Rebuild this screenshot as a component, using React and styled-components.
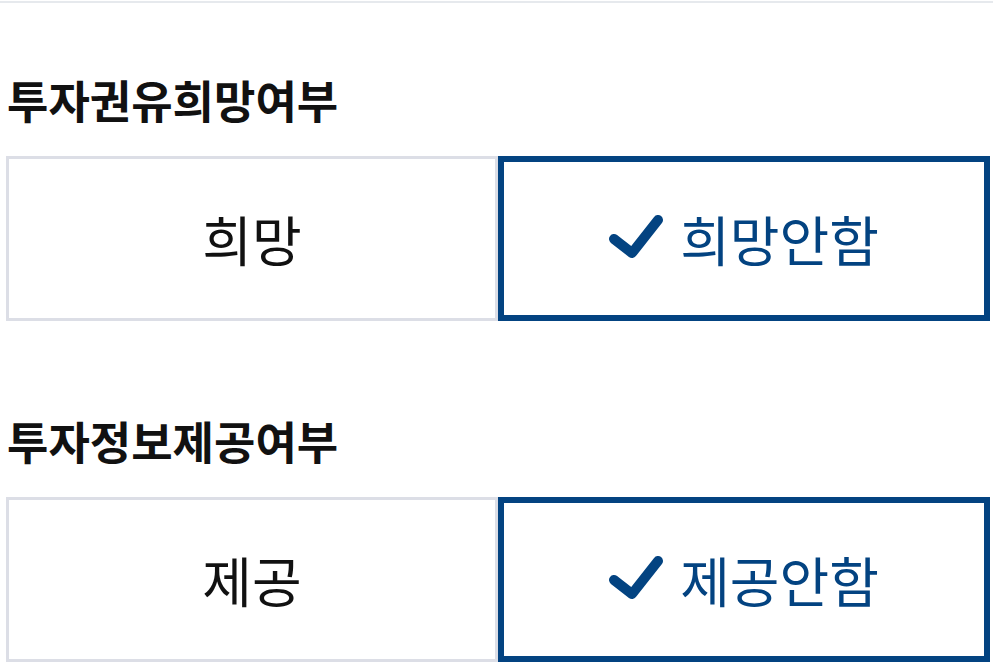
import React, { useState } from "react";
import styled, { createGlobalStyle } from "styled-components";

const GlobalStyle = createGlobalStyle`
  html, body {
    margin: 0;
    padding: 0;
    background: #ffffff;
    font-family: "Noto Sans CJK KR", "Noto Sans", sans-serif;
  }
`;

const Page = styled.div`
  padding: 1px 3px 0 6px;
  &::before {
    content: "";
    display: block;
    height: 2px;
    margin-left: -6px;
    margin-right: -3px;
    background: #e6e9ed;
  }
`;

const Section = styled.section`
  padding-top: ${(p) => p.$top}px;
`;

const Label = styled.h3`
  margin: 0 0 0 1px;
  font-size: 45px;
  font-weight: 700;
  line-height: 60px;
  color: #111111;
  letter-spacing: 0;
`;

const Options = styled.div`
  display: grid;
  grid-template-columns: 1fr 1fr;
  margin-top: ${(p) => p.$gap}px;
  height: 165px;
`;

const Option = styled.button`
  display: flex;
  align-items: center;
  justify-content: center;
  gap: 17px;
  box-sizing: border-box;
  height: 100%;
  margin: 0;
  padding: 0;
  background: #ffffff;
  border: ${(p) => (p.$active ? "6px solid #034381" : "3px solid #dcdee6")};
  color: ${(p) => (p.$active ? "#034381" : "#111111")};
  font-family: inherit;
  font-size: 54px;
  font-weight: 400;
  cursor: pointer;
`;

const Check = () => (
  <svg width="54" height="44" viewBox="0 0 54 44" style={{ marginTop: -4 }}>
    <path
      d="M5 24 L23 38 L49 5"
      fill="none"
      stroke="#034381"
      strokeWidth="10"
      strokeLinecap="round"
      strokeLinejoin="round"
    />
  </svg>
);

const Choice = ({ title, yes, no, top, gap }) => {
  const [value, setValue] = useState("no");
  return (
    <Section $top={top}>
      <Label>{title}</Label>
      <Options $gap={gap}>
        <Option $active={value === "yes"} onClick={() => setValue("yes")}>
          {value === "yes" && <Check />}
          {yes}
        </Option>
        <Option $active={value === "no"} onClick={() => setValue("no")}>
          {value === "no" && <Check />}
          {no}
        </Option>
      </Options>
    </Section>
  );
};

export default function App() {
  return (
    <>
      <GlobalStyle />
      <Page>
        <Choice title="투자권유희망여부" yes="희망" no="희망안함" top={67} gap={26} />
        <Choice title="투자정보제공여부" yes="제공" no="제공안함" top={90} gap={26} />
      </Page>
    </>
  );
}
